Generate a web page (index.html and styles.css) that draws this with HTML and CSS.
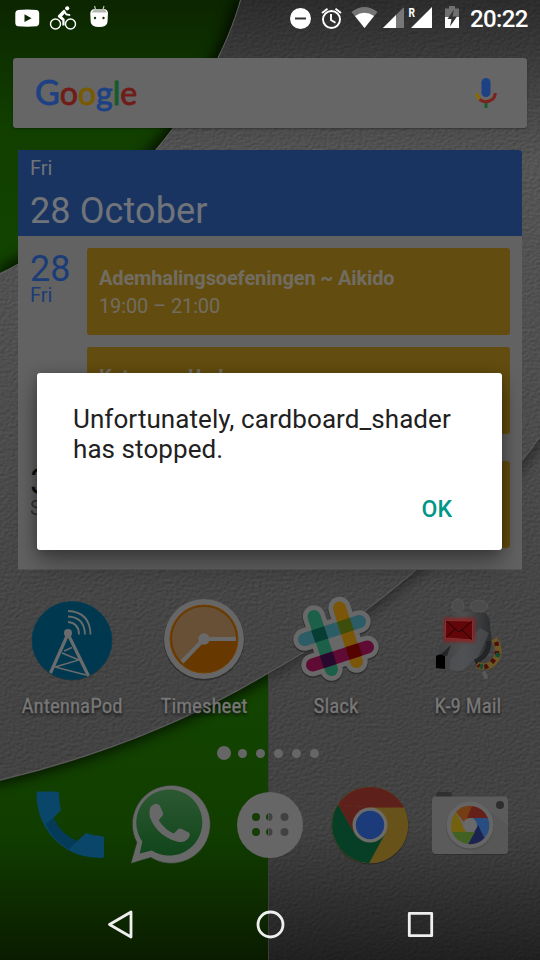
FILE: index.html
```html
<!DOCTYPE html>
<html lang="en">
<head>
<meta charset="utf-8">
<title>Home screen</title>
<link rel="stylesheet" href="styles.css">
</head>
<body>
<div class="phone">
  <svg class="wallpaper" viewBox="0 0 540 960" aria-hidden="true">
    <defs>
      <filter id="grain" x="0" y="0" width="100%" height="100%" color-interpolation-filters="sRGB">
        <feTurbulence type="fractalNoise" baseFrequency="0.28 0.36" numOctaves="3" seed="8"/>
        <feColorMatrix values="0 0 0 0 0  0 0 0 0 0  0 0 0 0 0  1 0 0 0 0"/>
        <feDiffuseLighting surfaceScale=".36" diffuseConstant="1" lighting-color="#727272"><feDistantLight azimuth="235" elevation="48"/></feDiffuseLighting>
      </filter>
      <filter id="soft" x="-20%" y="-20%" width="140%" height="140%"><feGaussianBlur stdDeviation="7"/></filter>
      <linearGradient id="shade" x2="0" y2="1">
        <stop offset="0" stop-opacity=".48"/><stop offset=".17" stop-opacity="0"/><stop offset=".45" stop-opacity=".1"/><stop offset=".62" stop-opacity=".18"/><stop offset=".86" stop-opacity=".22"/><stop offset="1" stop-opacity=".62"/>
      </linearGradient>
      <linearGradient id="greenTop" x2="0" y2="1"><stop offset="0" stop-color="#0b2500"/><stop offset=".45" stop-color="#113f00"/><stop offset="1" stop-color="#124500"/></linearGradient>
      <linearGradient id="greenLow" x2="0" y2="1"><stop offset="0" stop-color="#134500"/><stop offset=".55" stop-color="#113e00"/><stop offset="1" stop-color="#0a1c00"/></linearGradient>
      <clipPath id="c1"><path d="M0 0H240C225 52 198 99 155 150C105 205 60 244 0 273Z"/></clipPath>
      <clipPath id="c2"><path d="M0 781Q150 745 268 674V960H0Z"/></clipPath>
      <clipPath id="c3"><path d="M268 674C380 612 476 526 540 438V960H268Z"/></clipPath>
    </defs>
    <rect width="540" height="960" fill="#555"/>
    <rect width="540" height="960" filter="url(#grain)"/>
    <rect width="540" height="960" fill="url(#shade)"/>
    <path d="M240 0C225 52 198 99 155 150C105 205 60 244 0 273" fill="none" stroke="#666" stroke-width="2"/>
    <g clip-path="url(#c1)">
      <rect width="250" height="280" fill="url(#greenTop)"/>
      <path d="M244 0C229 52 202 99 159 150C109 205 64 244 0 277" fill="none" stroke="#000" stroke-width="15" opacity=".8" filter="url(#soft)"/>
    </g>
    <g clip-path="url(#c2)">
      <rect y="670" width="268" height="290" fill="url(#greenLow)"/>
      <path d="M-10 779Q150 741 280 664" fill="none" stroke="#000" stroke-width="13" opacity=".8" filter="url(#soft)"/>
      <path d="M272 650V980H276V650Z" fill="#000" stroke="#000" stroke-width="8" opacity=".8" filter="url(#soft)"/>
    </g>
    <g clip-path="url(#c3)"><path d="M260 674C380 608 476 522 545 430" fill="none" stroke="#000" stroke-width="12" opacity=".5" filter="url(#soft)"/></g>
    <path d="M0 780Q150 744 268 673C380 611 476 525 540 437" fill="none" stroke="#5c5c5c" stroke-width="1"/>
    <path d="M268.500 674V960" stroke="#3c3c3c"/>
  </svg>

  <header class="status">
    <svg viewBox="0 0 90 36" width="90" height="36" fill="#fff">
      <path fill-rule="evenodd" d="M18 10Q27 9 37 10Q39 10.300 39.200 13V23Q39 26 37 26.300Q27 27 18 26.300Q15.500 26 15.300 23V13Q15.500 10.300 18 10ZM24.500 14.300V22L31.500 18.200Z"/>
      <g fill="none" stroke="#fff" stroke-width="1.400"><circle cx="55.500" cy="24" r="5"/><circle cx="70.500" cy="24" r="5"/></g>
      <circle cx="67.200" cy="8.300" r="2.100"/>
      <path d="M58 15.500L63.300 10Q64.500 9.300 65.300 10.700L66.700 13.400L70.200 14.300V16L65.800 15.200L64.700 13.500L62 16.500L64.600 19V25.500H62.300V20.500L58.500 17.500Q57.200 16.500 58 15.500Z"/>
    </svg>
    <svg viewBox="0 0 20 36" width="20" height="36">
      <path d="M4.500 6L5.800 10M14 6L12.800 10" stroke="#bfc5bc" stroke-width="1.200"/>
      <path d="M0.300 13Q1 9 5 9H13.500Q17.500 9 18 13L17.500 22Q17 27 9.200 27Q1.200 27 .7 22Z" fill="#fff"/>
      <path d="M2 12.500Q3 9 6 9H13Q15.500 9 16.500 12.500Z" fill="#b3b9b0"/><circle cx="5" cy="18" r="1.200" fill="#163500"/><circle cx="13.500" cy="18" r="1.200" fill="#163500"/>
    </svg>
    <svg class="status-right" viewBox="286 0 178 36" width="178" height="36" fill="#fff">
      <circle cx="300.500" cy="18.500" r="10.500"/><path d="M295 18.500H306" stroke="#333" stroke-width="2"/>
      <g fill="none" stroke="#fff" stroke-width="1.900"><circle cx="331.500" cy="19.500" r="8.500"/><path d="M331 14V20L335.500 22.800M322 13L327.500 8.800M335.500 8.800L341 13"/></g>
      <path d="M351.500 12Q364.500 2 377.500 12L364.500 28Z" fill="#747474"/><path d="M355 16Q364.500 9.500 374 16L364.500 28Z"/>
      <path d="M404 7V28H383Z" fill="#777"/><path d="M396 15V28H383Z"/><path d="M432 7V28H411Z"/>
      <path d="M445 8.500H449V6H455V8.500H459V28H445Z" fill="#707070"/><path d="M445 17H459V28H445Z"/><path d="M454 9.500L447.500 19H451.500L450 26.500L457 16.500H452.500Z" fill="#333"/>
      <text x="408.500" y="16.500" class="roam" textLength="6.500" lengthAdjust="spacingAndGlyphs">R</text>
    </svg>
    <span class="clock">20:22</span>
  </header>

  <div class="search">
    <div class="google"><span class="b big">G</span><span class="r">o</span><span class="y">o</span><span class="b">g</span><span class="g">l</span><span class="r">e</span></div>
    <svg viewBox="0 0 24 32" width="24" height="32" fill="none" stroke-width="3">
      <path d="M12 25V31" stroke="#12602c"/><path d="M2.800 16A9.200 9.200 0 0 0 6 22.600" stroke="#8c6a02"/><path d="M5.500 22.500Q12 27 18.500 22.300Q21.200 20 21.200 16" stroke="#7a231c"/>
      <rect x="7.500" y="1" width="9" height="19" rx="4.500" fill="#1d4183"/>
    </svg>
  </div>

  <section class="calendar">
    <div class="cal-head"><div class="cal-day">Fri</div><div class="cal-date">28 October</div></div>
    <div class="cal-row first">
      <div class="date blue"><b>28</b><span>Fri</span></div>
      <div class="events">
        <div class="event"><strong>Ademhalingsoefeningen ~ Aikido</strong><span>19:00 – 21:00</span></div>
        <div class="event"><strong>Katsugen Undo</strong></div>
      </div>
    </div>
    <div class="cal-row second">
      <div class="date dark"><b>30</b><span>Sun</span></div>
      <div class="events"><div class="event"></div></div>
    </div>
  </section>

  <section class="apps">
    <div class="app">
      <svg viewBox="0 0 90 90" width="90" height="90" fill="none" stroke="#696b6c">
        <ellipse cx="45" cy="46" rx="40" ry="39.500" fill="#000" stroke="none" opacity=".3"/><ellipse cx="45" cy="45.500" rx="40" ry="39" fill="#00394f" stroke="#073f54" stroke-width=".8"/>
        <circle cx="41" cy="38" r="4" fill="#696b6c" stroke="none"/><path d="M40 41L23.500 78M42 41L61.500 81" stroke-width="3.200"/>
        <path d="M37 56L45 52.500M35 58L52 65L28 72L59 80" stroke-width="1.500"/>
        <path d="M41 27Q52 28 52 39.500M41 21.500Q57.500 22 58 39.500M41 16Q63 17 63.500 39.500" stroke-width="1.800"/>
      </svg><span class="label">AntennaPod</span>
    </div>
    <div class="app">
      <svg viewBox="0 0 90 90" width="90" height="90">
        <circle cx="45" cy="45" r="40.500" fill="#222" opacity=".6"/><circle cx="45" cy="44" r="40" fill="#666"/><circle cx="45" cy="44" r="34" fill="#673900" stroke="#754000" stroke-width="1"/><path d="M45 44H77A32 32 0 1 0 23 67Z" fill="#675035"/>
        <path d="M77 44H45L23 67" stroke="#696969" stroke-width="4" fill="none"/><circle cx="45" cy="44" r="5.800" fill="#696969"/>
      </svg><span class="label">Timesheet</span>
    </div>
    <div class="app">
      <svg viewBox="0.500 0 90 90" width="90" height="90" fill="none" stroke-linecap="round">
        <g stroke="#2e2e2e" stroke-width="23.500"><path d="M23.500 22.500L41 75.500M49 14L66 67.500M14 45.500L69 27.500M22 71L77 53"/></g>
        <g stroke="#686868" stroke-width="22.500"><path d="M23.500 21.500L41 74.500M49 13L66 66.500M14 44.500L69 26.500M22 70L77 52"/></g>
        <circle cx="45.500" cy="48" r="6" fill="#686868"/>
        <g stroke-width="13"><path d="M14 44.500L69 26.500" stroke="#2c5c65"/><path d="M23.500 21.500L41 74.500" stroke="#1d604a"/><path d="M49 13L66 66.500" stroke="#7b5609"/><path d="M22 70L77 52" stroke="#600b34"/></g>
        <g stroke-linecap="butt" stroke-width="13"><path d="M22.800 41.600L35.600 37.400" stroke="#073d33"/><path d="M48.500 33.200L61.300 29" stroke="#3d4d0c"/><path d="M31.300 67L44.100 62.800" stroke="#28092d"/><path d="M57 58.500L69.800 54.400" stroke="#540400"/></g>
      </svg><span class="label">Slack</span>
    </div>
    <div class="app">
      <svg viewBox="0 0 90 90" width="90" height="90">
        <defs><linearGradient id="dog"><stop stop-color="#3c3d3e"/><stop offset=".5" stop-color="#4e4f50"/><stop offset="1" stop-color="#2c2d2f"/></linearGradient><filter id="glow" x="-20%" y="-20%" width="140%" height="140%"><feGaussianBlur stdDeviation="1.800"/></filter></defs>
        <g fill="#4c4c4c" stroke="#606060" stroke-width=".6"><circle cx="35" cy="10.500" r="6"/><ellipse cx="56" cy="11" rx="8.500" ry="6"/></g>
        <path d="M30 18Q47 16 63 18Q68 24 67 33Q70 45 66 52L54 65L38 76L28 75L12 73Q11 66 14.500 60Q16 52 20 46L24 36Z" fill="url(#dog)"/>
        <path d="M27 75L27 65L45 46L57 33L66 38L55 62L38 76Z" fill="#525456" opacity=".6"/><path d="M17 60L28 50L24 61Z" fill="#242628"/>
        <path d="M13 61Q17 58 22 61V74L13 73Z" fill="#000"/>
        <path d="M66 46Q66 61 52 67" stroke="#232425" stroke-width="5" fill="none"/><path d="M71 44C82 58 70 77 54 70" fill="none" stroke="#6b5825" stroke-width="6.500"/><path d="M73 47Q77 58 69 67T55 70" fill="none" stroke="#4e0d0d" stroke-width="4.500" stroke-dasharray="4 5"/><path d="M75.500 58L74 62M60 72L57 71" stroke="#154b31" stroke-width="4.500"/>
        <path d="M61 78L63 82" stroke="#585a5a" stroke-width="4" stroke-linecap="round"/>
        <path d="M21 23H52V47H21Z" fill="#9b1515" opacity=".7" filter="url(#glow)"/><path d="M22.500 25.500L49.500 26V45L22.500 43Z" fill="#620609" stroke="#843033" stroke-width="1"/><path d="M23 26L36 37L49 26.500M23 42.500L32 34M49 44.500L39 35" fill="none" stroke="#240204"/>
      </svg><span class="label">K-9 Mail</span>
    </div>
  </section>

  <div class="pager"><i class="on"></i><i></i><i></i><i></i><i></i><i></i></div>

  <nav class="dock">
    <svg viewBox="0 0 90 90" width="90" height="90"><path d="M11.500 13Q11.500 50 43 70Q57 78 77 78Q79 78 79 76V58Q79 56 76 56Q69 56 61 53L51 62Q36 54 28.500 38L36 30Q34 23 34 14Q34 11.500 32 11.500H13Q11.500 11.500 11.500 13Z" fill="#09466a"/><path d="M28.500 38L20.500 44Q28 60 44 69.500L52 61Q36 54 28.500 38Z" fill="#063a59"/></svg>
    <svg viewBox="2.200 2.500 90 90" width="90" height="90"><defs><linearGradient id="wa" x2="0" y2="1"><stop stop-color="#2c5932"/><stop offset="1" stop-color="#11451a"/></linearGradient></defs><path d="M8 86L14 65A39 39 0 1 1 28 80Z" fill="#686868" stroke="#1f3b19" stroke-width=".6"/><path d="M17 76L19.500 64A33 33 0 1 1 29 73Z" fill="url(#wa)"/><path d="M28 29Q33 24 37 28L40 35Q41 38 38 40L36 43Q43 53 51 56L55 52Q57 50 60 52L66 55Q68 57 66 60Q62 66 54 64C39 60 30 49 27 39Q26 33 28 29Z" fill="#686868"/></svg>
    <svg viewBox="0 0 90 90" width="90" height="90"><circle cx="45" cy="45" r="33" fill="#666"/><g fill="#153d05"><circle cx="31" cy="37" r="4"/><circle cx="31" cy="52" r="4"/><path d="M43 33.500A4 4 0 0 0 43 40.500ZM43 48.500A4 4 0 0 0 43 55.500Z"/></g><g fill="#414141"><path d="M43.500 33A4 4 0 0 1 43.500 41ZM43.500 48A4 4 0 0 1 43.500 56Z"/><circle cx="59.500" cy="37" r="4"/><circle cx="59.500" cy="52" r="4"/></g></svg>
    <svg viewBox="0 0 90 90" width="90" height="90"><circle cx="45" cy="45.800" r="38.700" fill="#222" opacity=".6"/><circle cx="45" cy="45" r="38.300" fill="#67521a"/><path d="M45 27.500H79A38.300 38.300 0 0 0 13 24.500Z" fill="#5d201b"/><path d="M13 24.500A38.300 38.300 0 0 0 44 83.200L60 54L45 45L30 54Z" fill="#063f25"/><path d="M13 24.500L30 54L45 45V27.500Z" fill="#5d201b"/><circle cx="45" cy="45" r="17.500" fill="#6d6b68"/><circle cx="45" cy="45" r="14.200" fill="#1c3b7a"/></svg>
    <svg viewBox="0 0 90 90" width="90" height="90"><rect x="11" y="12" width="16" height="10" rx="3" fill="#303030"/><rect x="7" y="17" width="76" height="58" rx="4" fill="#303030"/><rect x="7" y="16.500" width="76" height="57.500" rx="4" fill="#5b5b5b"/><path d="M62 29L83 46V70Q83 74 79 74H50L34 60Z" fill="#575757"/><circle cx="45" cy="46" r="24" fill="#4e4e4e"/><circle cx="45" cy="45" r="23.500" fill="#656565"/><circle cx="75" cy="25" r="4" fill="#2e2e2e"/>
      <path d="M45 45L47 26A19 19 0 0 0 31 32L38 41Z" fill="#753d13"/><path d="M47 26A19 19 0 0 1 63 38H42Z" fill="#642019"/><path d="M63 38A19 19 0 0 1 59.500 58L48 38Z" fill="#294d80"/><path d="M59.500 58Q53 65 43 64L53 45Z" fill="#1b2451"/><path d="M43 64Q31 62 27 52H50Z" fill="#426123"/><path d="M27 52Q24 41 31 32L41 52Z" fill="#73610f"/><circle cx="45" cy="45" r="7" fill="#696969"/></svg>
  </nav>

  <footer class="navbar">
    <svg viewBox="0 0 36 36" width="36" height="36"><path d="M7.500 18.500L29 6V31Z"/></svg>
    <svg viewBox="0 0 36 36" width="36" height="36"><circle cx="18.500" cy="18.500" r="12.500"/></svg>
    <svg viewBox="0 0 36 36" width="36" height="36"><path d="M7.300 7.300H29.700V29.700H7.300Z"/></svg>
  </footer>

  <div class="dialog" role="alertdialog">
    <p>Unfortunately, cardboard_shader has stopped.</p>
    <button>OK</button>
  </div>
</div>
</body>
</html>
```
FILE: styles.css
```css
* { box-sizing: border-box; }
body { margin: 0; background: #222; font-family: Roboto, "Liberation Sans", sans-serif; }
.phone { position: relative; width: 540px; height: 960px; overflow: hidden; display: flex; flex-direction: column; isolation: isolate; }
.wallpaper { position: absolute; inset: 0; width: 540px; height: 960px; z-index: -1; }
svg { display: block; flex: none; }

.status { height: 36px; display: flex; flex: none; color: #fff; }
.status-right { margin-left: 176px; }
.roam { font: 700 12px Roboto, sans-serif; }
.clock { font-size: 24px; line-height: 38px; font-weight: 500; margin-left: 6px; letter-spacing: -.6px; }

.search { height: 70px; flex: none; margin: 22px 13px 0; padding: 0 29px 0 22px; background: #666; border-radius: 3px; box-shadow: 0 1px 2px rgba(0,0,0,.3); display: flex; align-items: center; justify-content: space-between; }
.google { font: 400 32px/48px Lato, sans-serif; padding-bottom: 2px; -webkit-text-stroke: .9px currentColor; }
.google .big { font-size: 34px; }
.google .b { color: #1d4183; -webkit-text-stroke-color: #1d4183; }
.google .r { color: #701d18; -webkit-text-stroke-color: #701d18; }
.google .y { color: #795a00; -webkit-text-stroke-color: #795a00; }
.google .g { color: #175a2d; -webkit-text-stroke-color: #175a2d; }

.calendar { height: 420px; flex: none; margin: 22px 18px 0; background: #626262; border-radius: 3px 3px 0 0; overflow: hidden; border-bottom: 1px solid #555; }
.cal-head { height: 86px; background: #1a3462; color: #707479; padding: 6px 12px 0; }
.cal-day { font-size: 20px; line-height: 24px; }
.cal-date { font-size: 36px; line-height: 42px; margin-top: 10px; letter-spacing: .1px; }
.cal-row { display: flex; padding: 0 12px; }
.cal-row.first { padding-top: 12px; }
.cal-row.second { padding-top: 27px; }
.date { width: 57px; flex: none; display: flex; flex-direction: column; padding-top: 3px; }
.date b { font-weight: 400; font-size: 36px; line-height: 36px; }
.date span { font-size: 20px; line-height: 16px; }
.blue { color: #1b3c76; }
.dark b { color: #111; }
.dark span { color: #333; }
.events { flex: 1; display: flex; flex-direction: column; gap: 12px; }
.event { height: 87px; background: #634c0f; border-radius: 3px; padding: 18px 12px; color: #716c61; font-size: 20px; display: flex; flex-direction: column; }
.event strong { line-height: 25px; font-weight: 700; white-space: nowrap; letter-spacing: -.13px; }
.event span { line-height: 30px; letter-spacing: -.12px; }

.apps { flex: none; display: flex; padding: 0 6px; margin-top: 25px; height: 128px; }
.app { width: 132px; display: flex; flex-direction: column; align-items: center; }
.label { font-family: "Roboto Condensed", Roboto, sans-serif; font-size: 21px; line-height: 26px; margin-top: 8px; color: #777; text-shadow: 0 2px 3px #111; white-space: nowrap; -webkit-text-stroke: .3px #777; }

.pager { height: 24px; margin: 18px 0 0; padding-right: 4px; flex: none; display: flex; justify-content: center; align-items: center; gap: 9px; }
.pager i { width: 9px; height: 9px; border-radius: 50%; background: #666; }
.pager .on { width: 14px; height: 14px; margin-right: -2px; }

.dock { flex: none; display: flex; justify-content: center; gap: 10px; margin-top: 15px; }
.navbar { flex: none; display: flex; justify-content: center; gap: 114px; margin-top: 36px; }
.navbar svg { fill: none; stroke: #efefef; stroke-width: 2.800; stroke-linejoin: round; }

.dialog { position: absolute; left: 37px; top: 373px; width: 465px; height: 177px; background: #fff; border-radius: 3px; padding: 31px 36px 0; box-shadow: 0 14px 26px rgba(0,0,0,.34), 0 2px 12px rgba(0,0,0,.25); display: flex; flex-direction: column; }
.dialog p { margin: 0; font-size: 26px; line-height: 30px; color: #212121; letter-spacing: .07px; }
.dialog button { align-self: flex-end; margin: 28px 14px 0 0; padding: 0; border: 0; background: none; color: #009688; font: 500 23px/36px Roboto, sans-serif; }
```
